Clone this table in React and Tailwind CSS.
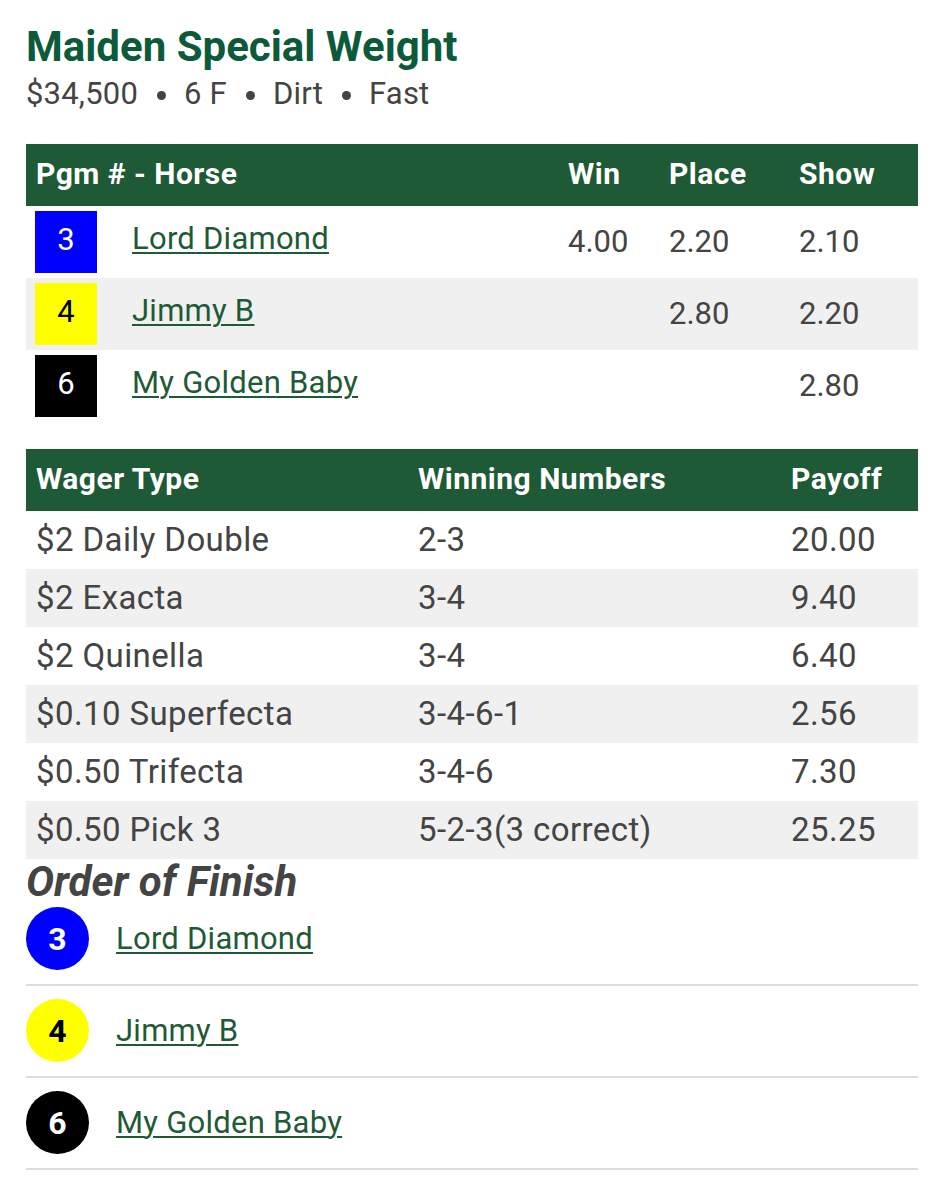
import React from 'react';

const font = { fontFamily: 'Roboto, "Noto Sans", sans-serif' };

const horses = [
    { pgm: '3', name: 'Lord Diamond', box: 'bg-[#0000ff] text-white', win: '4.00', place: '2.20', show: '2.10' },
    { pgm: '4', name: 'Jimmy B', box: 'bg-[#ffff00] text-black', win: '', place: '2.80', show: '2.20' },
    { pgm: '6', name: 'My Golden Baby', box: 'bg-black text-white', win: '', place: '', show: '2.80' },
];

const wagers = [
    ['$2 Daily Double', '2-3', '20.00'],
    ['$2 Exacta', '3-4', '9.40'],
    ['$2 Quinella', '3-4', '6.40'],
    ['$0.10 Superfecta', '3-4-6-1', '2.56'],
    ['$0.50 Trifecta', '3-4-6', '7.30'],
    ['$0.50 Pick 3', '5-2-3(3 correct)', '25.25'],
];

const finish = [
    { pgm: '3', name: 'Lord Diamond', circle: 'bg-[#0000ff] text-white' },
    { pgm: '4', name: 'Jimmy B', circle: 'bg-[#ffff00] text-black' },
    { pgm: '6', name: 'My Golden Baby', circle: 'bg-black text-white' },
];

const Dot = () => (
    <span className="inline-block w-[9px] h-[9px] rounded-full bg-[#444] align-middle ml-[19px] mr-[18px]" />
);

const App = () => {
    return (
        <div className="bg-white min-h-[1200px] pl-[26px] pr-[27px] pt-[22px]" style={font}>
            {/* Race heading */}
            <h1 className="text-[42px] leading-[50px] font-bold text-[#0b5a3a]">Maiden Special Weight</h1>
            <p className="mt-[3px] text-[31px] leading-[38px] tracking-[0.2px] text-[#444]">
                {'$34,500'}<Dot />{'6 F'}<Dot />{'Dirt'}<Dot />{'Fast'}
            </p>

            {/* Win / Place / Show */}
            <div className="mt-[31px]">
                <div className="grid grid-cols-[532px_101px_130px_1fr] h-[62px] pt-[12px] bg-[#1f5a36] text-white font-bold text-[30px] leading-[36px] tracking-[0.5px]">
                    <div className="pl-[10px]">Pgm # - Horse</div>
                    <div className="pl-[10px]">Win</div>
                    <div className="pl-[10px]">Place</div>
                    <div className="pl-[10px]">Show</div>
                </div>
                {horses.map((h, i) => (
                    <div key={h.pgm} className={`grid grid-cols-[532px_101px_130px_1fr] h-[72px] items-start text-[31px] leading-[36px] text-[#444] ${i % 2 === 1 ? 'bg-[#f0f0f0]' : ''}`}>
                        <div className="flex items-start">
                            <div className={`w-[62px] h-[62px] mt-[5px] ml-[9px] pt-[11px] text-center ${h.box}`}>{h.pgm}</div>
                            <a href="#" className="ml-[35px] mt-[15px] tracking-[0.25px] text-[#1f5a36] underline decoration-[2px] underline-offset-[3px]">{h.name}</a>
                        </div>
                        <div className="pl-[10px] pt-[18px]">{h.win}</div>
                        <div className="pl-[10px] pt-[18px]">{h.place}</div>
                        <div className="pl-[10px] pt-[18px]">{h.show}</div>
                    </div>
                ))}
            </div>

            {/* Wagers */}
            <div className="mt-[27px]">
                <div className="grid grid-cols-[382px_373px_1fr] h-[62px] pt-[12px] bg-[#1f5a36] text-white font-bold text-[30px] leading-[36px] tracking-[0.5px]">
                    <div className="pl-[10px]">Wager Type</div>
                    <div className="pl-[10px]">Winning Numbers</div>
                    <div className="pl-[10px]">Payoff</div>
                </div>
                {wagers.map((w, i) => (
                    <div key={w[0]} className={`grid grid-cols-[382px_373px_1fr] h-[58px] pt-[11px] text-[33px] leading-[36px] tracking-[0.4px] text-[#444] ${i % 2 === 1 ? 'bg-[#f0f0f0]' : ''}`}>
                        <div className="pl-[10px]">{w[0]}</div>
                        <div className="pl-[10px]">{w[1]}</div>
                        <div className="pl-[10px]">{w[2]}</div>
                    </div>
                ))}
            </div>

            {/* Order of finish */}
            <h2 className="text-[42px] leading-[46px] font-bold italic text-[#444]">Order of Finish</h2>
            <ul>
                {finish.map((f, i) => (
                    <li key={f.pgm} className={`flex items-center border-b-2 border-[#ddd] pb-[14px] ${i === 0 ? 'pt-[2px]' : 'pt-[13px]'}`}>
                        <div className={`w-[63px] h-[63px] rounded-full flex items-center justify-center font-bold text-[32px] ${f.circle}`}>{f.pgm}</div>
                        <a href="#" className="ml-[27px] text-[31px] leading-[36px] tracking-[0.25px] text-[#1f5a36] underline decoration-[2px] underline-offset-[3px]">{f.name}</a>
                    </li>
                ))}
            </ul>
        </div>
    );
};

export default App;
